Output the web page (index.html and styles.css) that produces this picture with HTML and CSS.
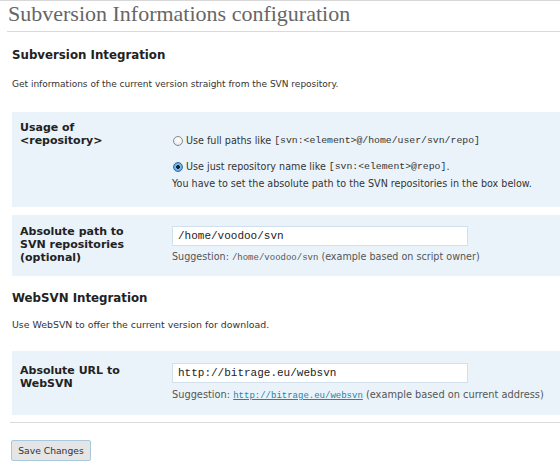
FILE: index.html
```html
<!DOCTYPE html>
<html>
<head>
<meta charset="utf-8">
<title>Subversion Informations configuration</title>
<link rel="stylesheet" href="styles.css">
</head>
<body>
<div class="wrap">
  <h2 class="page-title">Subversion Informations configuration</h2>

  <h3 class="section-title first">Subversion Integration</h3>
  <p class="section-desc">Get informations of the current version straight from the SVN repository.</p>

  <div class="form-table first">
    <div class="form-row row-usage">
      <div class="row-label">Usage of<br>&lt;repository&gt;</div>
      <div class="row-field">
        <label class="radio-line"><input type="radio" name="usage" class="radio"> Use full paths like <code>[svn:&lt;element&gt;@/home/user/svn/repo]</code></label>
        <label class="radio-line second"><input type="radio" name="usage" class="radio" checked> Use just repository name like <code>[svn:&lt;element&gt;@repo]</code>.</label>
        <div class="note">You have to set the absolute path to the SVN repositories in the box below.</div>
      </div>
    </div>
    <div class="form-row row-path">
      <div class="row-label">Absolute path to SVN repositories (optional)</div>
      <div class="row-field">
        <input type="text" class="text-input" value="/home/voodoo/svn">
        <div class="hint">Suggestion: <code>/home/voodoo/svn</code> (example based on script owner)</div>
      </div>
    </div>
  </div>

  <h3 class="section-title">WebSVN Integration</h3>
  <p class="section-desc second">Use WebSVN to offer the current version for download.</p>

  <div class="form-table">
    <div class="form-row row-url">
      <div class="row-label">Absolute URL to WebSVN</div>
      <div class="row-field">
        <input type="text" class="text-input" value="http://bitrage.eu/websvn">
        <div class="hint">Suggestion: <a href="#" class="hint-link"><code>http://bitrage.eu/websvn</code></a> (example based on current address)</div>
      </div>
    </div>
  </div>

  <div class="submit">
    <button type="button" class="button">Save Changes</button>
  </div>
</div>
</body>
</html>
```

FILE: styles.css
```css
html, body {
  margin: 0;
  padding: 0;
  background: #fff;
}

body {
  font-family: "DejaVu Sans", Verdana, sans-serif;
  color: #333;
  border-top: 1px solid #d8d8d8;
}

.page-title {
  margin: 0 0 0 7px;
  padding: 1px 0 5px 1px;
  font-family: "Liberation Serif", "Times New Roman", serif;
  font-weight: normal;
  font-size: 22px;
  line-height: 24px;
  color: #666;
  border-bottom: 1px solid #dadada;
}

.section-title {
  margin: 14px 0 0 12px;
  font-size: 11.8px;
  line-height: 16px;
  font-weight: bold;
  color: #222;
}

.section-title.first {
  margin-top: 15px;
}

.section-desc {
  margin: 15px 0 0 12px;
  font-size: 9px;
  line-height: 12px;
  color: #333;
}

.section-desc.second {
  margin-top: 13px;
  font-size: 9.4px;
}

.form-table {
  margin: 20px 0 0 12px;
}

.form-table.first {
  margin-top: 22px;
}

.form-row {
  display: flex;
  background: #eaf3fa;
  border-bottom: 8px solid #fff;
}

.form-table .form-row:last-child {
  border-bottom: 0;
}

.row-label {
  box-sizing: border-box;
  flex: 0 0 160px;
  padding: 10px 30px 10px 8px;
  font-size: 11px;
  line-height: 13px;
  font-weight: bold;
  color: #222;
}

.row-field {
  flex: 1;
  font-size: 9.6px;
  line-height: 12px;
  color: #333;
}

.row-usage .row-label { padding-top: 9px; }
.row-usage .row-field { padding: 23px 0 17px 0; }
.row-path .row-field { padding: 11px 0 12px 0; }
.row-url .row-label { padding-top: 13px; }
.row-url .row-field { padding: 12px 0 13px 0; }

.radio-line {
  display: flex;
  align-items: center;
  height: 12px;
}

.radio-line.second {
  margin-top: 14px;
}

.note {
  margin-top: 5px;
}

code {
  font-family: "Liberation Mono", "Courier New", monospace;
  font-size: 9px;
}

.radio-line code {
  margin-left: 3px;
  font-size: 9.8px;
}

.radio {
  -webkit-appearance: none;
  appearance: none;
  box-sizing: border-box;
  width: 10px;
  height: 10px;
  margin: 0 3px 0 1px;
  border-radius: 50%;
  border: 1px solid #8a8a8a;
  background: radial-gradient(circle at 50% 35%, #ffffff 0%, #f2f2f2 55%, #d0d0d0 100%);
}

.radio:checked {
  border-color: #3a6a9a;
  background: radial-gradient(circle, #0b2440 0 1.6px, #7fc0ee 2.2px, #3d8fd4 100%);
}

.text-input {
  display: block;
  box-sizing: border-box;
  width: 296px;
  height: 20px;
  margin: 0;
  padding: 0 5px;
  border: 1px solid #d1e0ec;
  background: #fff;
  font-family: "Liberation Mono", "Courier New", monospace;
  font-size: 11px;
  color: #222;
  outline: none;
}

.hint {
  margin-top: 5px;
  color: #555;
}

.row-url .hint {
  margin-top: 6px;
  font-size: 9.8px;
}

.hint-link {
  color: #2583ad;
  text-decoration: underline;
}

.submit {
  margin: 7px 0 0 10px;
  padding: 17px 0 0 0;
  border-top: 1px solid #dadada;
}

.button {
  display: block;
  box-sizing: border-box;
  width: 80px;
  height: 21px;
  margin: 0 0 0 1px;
  padding: 0;
  font-family: "DejaVu Sans", Verdana, sans-serif;
  font-size: 9.2px;
  color: #333;
  background: #e5e5e5;
  border: 1px solid #a9c8dc;
  border-radius: 2px;
}
```
